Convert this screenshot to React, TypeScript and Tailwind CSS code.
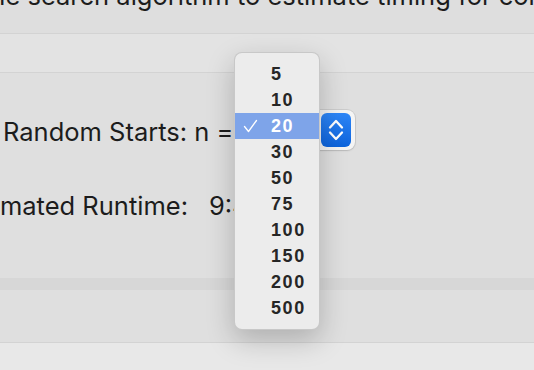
import { useState } from "react";

const options = [5, 10, 20, 30, 50, 75, 100, 150, 200, 500];

function Chevrons() {
  return (
    <svg width="16" height="26" viewBox="0 0 16 26" fill="none">
      <path d="M2 10.5L8 4L14 10.5" stroke="white" strokeWidth="2.3" strokeLinecap="round" strokeLinejoin="round" />
      <path d="M2 15.5L8 22L14 15.5" stroke="white" strokeWidth="2.3" strokeLinecap="round" strokeLinejoin="round" />
    </svg>
  );
}

export default function App() {
  const [selected, setSelected] = useState(20);

  return (
    <div
      className="relative w-[534px] h-[370px] overflow-hidden bg-[#dfdfdf] text-[#1c1c1c]"
      style={{ fontFamily: "Inter, 'Liberation Sans', sans-serif" }}
    >
      {/* description, scrolled so only its bottom shows */}
      <div className="h-[33px] bg-[#dedede] overflow-hidden">
        <p className="mt-[-19px] ml-[-18px] whitespace-nowrap text-[25.5px] leading-[30px]">
          the search algorithm to estimate timing for configurations
        </p>
      </div>
      <div className="h-[40px] bg-[#e3e3e3] border-y border-[#d3d3d3]" />

      <div className="h-[205px] pt-[37px]">
        <div className="flex items-center h-[40px]">
          <span className="ml-[3px] pt-[4px] text-[25.5px] whitespace-nowrap shrink-0">Random Starts: n =</span>
          <div className="ml-[6px] flex items-center justify-end w-[116px] h-[40px] rounded-[8px] bg-[#f4f4f4] shadow-[0_0_0_1px_rgba(0,0,0,0.08),0_1px_2px_rgba(0,0,0,0.1)] pr-[4px] shrink-0">
            <div className="w-[30px] h-[34px] rounded-[6px] bg-gradient-to-b from-[#2d86f7] to-[#0b63dc] flex items-center justify-center">
              <Chevrons />
            </div>
          </div>
        </div>
        <div className="flex items-center h-[40px] mt-[36px] text-[25.5px] whitespace-nowrap">
          <div className="w-[188px] flex justify-end shrink-0">
            <span className="shrink-0">Estimated Runtime:</span>
          </div>
          <span className="ml-[21px]">9:41</span>
        </div>
      </div>

      <div className="h-[12px] bg-[#d7d7d7]" />
      <div className="h-[53px] bg-[#dfdfdf] border-b border-[#d3d3d3]" />
      <div className="h-[30px] bg-[#e8e8e8]" />

      {/* open popup menu */}
      <div className="absolute left-[234px] top-[52px] w-[86px] py-[8px] rounded-[8px] bg-[#ececec] border border-[#b9b9b9]/70 shadow-[0_10px_28px_rgba(0,0,0,0.22)]">
        {options.map((n) => (
          <button
            key={n}
            type="button"
            onClick={() => setSelected(n)}
            className={`flex items-center w-full h-[26px] text-left ${
              n === selected ? "bg-[#7ea4e9] text-white" : "text-[#262626]"
            }`}
          >
            <span className="w-[36px] pl-[8px] flex items-center shrink-0">
              {n === selected && (
                <svg width="15" height="14" viewBox="0 0 15 14" fill="none">
                  <path d="M1.5 7.5L5.5 12.5L13.5 1.5" stroke="white" strokeWidth="1.3" strokeLinecap="round" strokeLinejoin="round" />
                </svg>
              )}
            </span>
            <span
              className="text-[18px] font-bold tracking-[1.6px] leading-none"
              style={{ fontFamily: "'Liberation Sans', Arial, sans-serif" }}
            >
              {n}
            </span>
          </button>
        ))}
      </div>
    </div>
  );
}
